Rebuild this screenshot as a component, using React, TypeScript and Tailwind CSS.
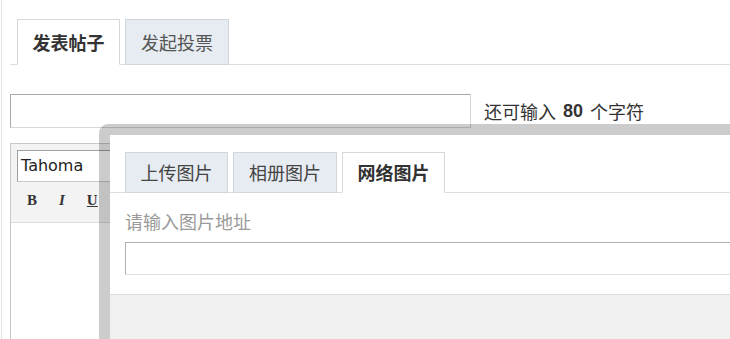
import React from "react";

const font = { fontFamily: '"Noto Sans CJK SC", "Liberation Sans", sans-serif' };

export default function App() {
  return (
    <div className="relative w-[730px] h-[339px] overflow-hidden bg-white" style={font}>
      <div className="ml-[1px] h-full border-l border-[#e3e3e3] pl-[8px]">
        {/* Top tabs */}
        <div className="flex items-end gap-[5px] border-b border-[#dddddd] pl-[7px] pt-[19px] h-[65px]">
          <div className="w-[103px] h-[46px] -mb-px border border-[#d8d8d8] border-b-white bg-white flex items-center justify-center text-[18px] font-bold text-[#333]">
            发表帖子
          </div>
          <div className="w-[104px] h-[46px] -mb-px border border-[#d0d6dc] bg-[#e6ecf1] flex items-center justify-center text-[18px] text-[#555]">
            发起投票
          </div>
        </div>

        {/* Title row */}
        <div className="mt-[29px] flex items-center">
          <div className="w-[461px] h-[34px] border border-[#d6d6d6] border-t-[#a9a9a9] border-l-[#a9a9a9] bg-white" />
          <div className="ml-[13px] text-[18px] text-[#333] flex items-center">
            <span>还可输入</span>
            <span className="font-bold mx-[7px]" style={{ fontFamily: '"Liberation Sans", sans-serif' }}>80</span>
            <span>个字符</span>
          </div>
        </div>

        {/* Editor */}
        <div className="mt-[15px] w-[700px] h-[220px] border border-[#c8c8c8]">
          <div className="bg-[#f3f3f3] h-[79px] border-b border-[#dddddd] pt-[6px] pl-[6px]">
            <div
              className="w-[120px] h-[32px] bg-white border border-[#c8c8c8] border-t-[#a0a0a0] border-l-[#a0a0a0] flex items-center pl-[3px] text-[16px] text-[#222]"
              style={{ fontFamily: '"DejaVu Sans", sans-serif' }}
            >
              Tahoma
            </div>
            <div
              className="flex items-center gap-[22px] pl-[10px] mt-[7px] text-[15px] text-[#333]"
              style={{ fontFamily: '"Liberation Serif", serif' }}
            >
              <span className="font-bold">B</span>
              <span className="italic font-bold">I</span>
              <span className="underline font-bold">U</span>
            </div>
          </div>
        </div>
      </div>

      {/* Dialog */}
      <div className="absolute left-[99px] top-[124px] w-[720px] h-[260px] rounded-tl-[9px] border-[11px] border-[rgba(0,0,0,0.2)] bg-clip-padding">
        <div className="bg-white h-full flex flex-col">
          <div className="flex items-end gap-[5px] border-b border-[#dddddd] pl-[15px] pt-[17px] h-[58px]">
            <div className="w-[103px] h-[41px] -mb-px border border-[#d0d6dc] bg-[#e6ecf1] flex items-center justify-center text-[18px] text-[#444]">
              上传图片
            </div>
            <div className="w-[104px] h-[41px] -mb-px border border-[#d0d6dc] bg-[#e6ecf1] flex items-center justify-center text-[18px] text-[#444]">
              相册图片
            </div>
            <div className="w-[103px] h-[41px] -mb-px border border-[#d8d8d8] border-b-white bg-white flex items-center justify-center text-[18px] font-bold text-[#333]">
              网络图片
            </div>
          </div>
          <div className="pl-[15px] pt-[17px] h-[102px] border-b border-[#dcdcdc]">
            <div className="text-[18px] leading-[22px] text-[#9a9a9a]">请输入图片地址</div>
            <div className="mt-[10px] w-[640px] h-[33px] border border-[#e0e0e0] border-t-[#b0b0b0] border-l-[#b0b0b0] bg-white" />
          </div>
          <div className="flex-1 bg-[#f0f0f0]" />
        </div>
      </div>
    </div>
  );
}
